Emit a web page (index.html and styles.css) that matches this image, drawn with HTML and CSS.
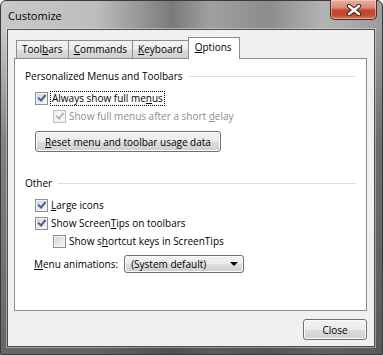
FILE: index.html
```html
<!DOCTYPE html>
<html lang="en">

<head>
    <meta charset="UTF-8">
    <link rel="stylesheet" href="styles.css">
    <title>Customize</title>
</head>

<body>
    <div class="window">
        <div class="titlebar">
            <span class="title">Customize</span>
            <div class="close-x">
                <svg width="20" height="12" viewBox="0 0 20 12">
                    <path d="M5 2 L15 10 M15 2 L5 10" stroke="#3a2420" stroke-width="4.4" stroke-linecap="round" fill="none"/>
                    <path d="M5 2 L15 10 M15 2 L5 10" stroke="#ffffff" stroke-width="2.4" stroke-linecap="round" fill="none"/>
                </svg>
            </div>
        </div>
        <div class="frame">
            <div class="client">
                <div class="tabs">
                    <div class="tab">Tool<u>b</u>ars</div>
                    <div class="tab"><u>C</u>ommands</div>
                    <div class="tab"><u>K</u>eyboard</div>
                    <div class="tab active"><u>O</u>ptions</div>
                </div>
                <div class="panel">
                    <!-- personalized menus -->
                    <div class="group-title"><span>Personalized Menus and Toolbars</span></div>
                    <div class="row">
                        <span class="box checked"></span>
                        <span class="focus">Always show full me<u>n</u>us</span>
                    </div>
                    <div class="row sub disabled">
                        <span class="box checked"></span>
                        <span>Show full menus after a short <u>d</u>elay</span>
                    </div>
                    <div class="btn reset"><u>R</u>eset menu and toolbar usage data</div>

                    <!-- other -->
                    <div class="group-title other"><span>Other</span></div>
                    <div class="row">
                        <span class="box checked"></span>
                        <span><u>L</u>arge icons</span>
                    </div>
                    <div class="row">
                        <span class="box checked"></span>
                        <span>Show Screen<u>T</u>ips on toolbars</span>
                    </div>
                    <div class="row sub">
                        <span class="box"></span>
                        <span>Show s<u>h</u>ortcut keys in ScreenTips</span>
                    </div>
                    <div class="anim-row">
                        <span><u>M</u>enu animations:</span>
                        <div class="select">
                            <span>(System default)</span>
                            <span class="arrow"></span>
                        </div>
                    </div>
                </div>
                <div class="footer">
                    <div class="btn close-btn">Close</div>
                </div>
            </div>
        </div>
    </div>
</body>

</html>
```
FILE: styles.css
```css
* {
    box-sizing: border-box;
}

body {
    margin: 0;
    background: #ffffff;
    font-family: 'Open Sans', sans-serif;
    font-size: 10px;
    color: #000;
}

.window {
    width: 383px;
    height: 355px;
    border: 1px solid #3a3a3a;
    border-radius: 6px 6px 0 0;
    display: flex;
    flex-direction: column;
    background:
        linear-gradient(to bottom, rgba(70, 70, 70, 0) 30px, rgba(70, 70, 70, 0.55) 140px, rgba(60, 60, 60, 0.7) 100%),
        linear-gradient(to right, #c9c9c9 0%, #bdbdbd 25%, #7a7a7a 45%, #a0a0a0 55%, #8c8c8c 70%, #b4b4b4 85%, #9c9c9c 100%);
}

.titlebar {
    height: 28px;
    display: flex;
    justify-content: space-between;
    align-items: flex-start;
    padding-left: 7px;
    padding-right: 5px;
}

.title {
    margin-top: 7px;
    font-size: 11px;
    color: #000;
}

.close-x {
    width: 47px;
    height: 20px;
    margin-top: -1px;
    border: 1px solid #4d2a24;
    border-top: none;
    border-radius: 0 0 5px 5px;
    background: linear-gradient(to bottom, #e8b0a0 0%, #d98a74 40%, #c7452c 55%, #c24a30 80%, #d8785c 100%);
    box-shadow: inset 0 0 0 1px rgba(255, 220, 210, 0.5);
    display: flex;
    justify-content: center;
    align-items: center;
}

.frame {
    flex: 1;
    padding: 0 7px 7px 6px;
    display: flex;
}

.client {
    flex: 1;
    background: #f0f0f0;
    border: 1px solid #4f4f4f;
    box-shadow: 0 0 0 1px rgba(230, 230, 230, 0.45);
    padding: 7px 7px 0 6px;
    display: flex;
    flex-direction: column;
}

.tabs {
    display: flex;
    align-items: flex-end;
    padding-left: 2px;
    height: 21px;
}

.tab {
    height: 18px;
    padding: 0 5px 0 5px;
    border: 1px solid #898c95;
    border-bottom: none;
    border-right: none;
    background: linear-gradient(to bottom, #f3f3f3 0%, #ebebeb 50%, #dddddd 51%, #cfcfcf 100%);
    line-height: 17px;
}

.tab:nth-child(3) {
    border-right: 1px solid #898c95;
}

.tab.active {
    height: 22px;
    margin-bottom: -1px;
    margin-left: -1px;
    padding: 0 7px 0 6px;
    background: #ffffff;
    border-right: 1px solid #898c95;
    position: relative;
    line-height: 18px;
}

.panel {
    height: 253px;
    background: #ffffff;
    border: 1px solid #898c95;
    padding: 9px 10px 0 10px;
}

.group-title {
    display: flex;
    align-items: center;
    height: 16px;
    color: #000;
}

.group-title::after {
    content: "";
    flex: 1;
    height: 1px;
    background: #d5dfe5;
    margin-left: 6px;
}

.row {
    display: flex;
    align-items: center;
    height: 18px;
    margin-left: 10px;
}

.row.sub {
    margin-left: 28px;
}

.group-title + .row {
    margin-top: 5px;
}

.box {
    width: 13px;
    height: 13px;
    border: 1px solid #8e8f8f;
    background: linear-gradient(135deg, #cdd0d6 0%, #eeeeee 70%, #f8f8f8 100%);
    box-shadow: inset 0 0 0 1px #f4f4f4;
    margin-right: 3px;
    display: flex;
    justify-content: center;
    align-items: center;
}

.box.checked::after {
    content: "";
    width: 6px;
    height: 3px;
    border-left: 2px solid #4a5f9a;
    border-bottom: 2px solid #4a5f9a;
    transform: rotate(-50deg) translate(1px, -1px);
}

.disabled {
    color: #8d8d8d;
}

.disabled .box {
    border-color: #bcbcbc;
    background: #f4f4f4;
}

.disabled .box.checked::after {
    border-color: #b5b5b5;
}

.focus {
    outline: 1px dotted #000;
    padding: 0 1px;
    line-height: 13px;
}

.btn {
    border: 1px solid #707070;
    border-radius: 3px;
    background: linear-gradient(to bottom, #f2f2f2 0%, #ebebeb 50%, #dddddd 51%, #cfcfcf 100%);
    box-shadow: inset 0 0 0 1px #fcfcfc;
    display: flex;
    justify-content: center;
    align-items: center;
}

.reset {
    width: 186px;
    height: 21px;
    margin: 6px 0 0 10px;
}

.other {
    margin-top: 23px;
}

.anim-row {
    display: flex;
    align-items: center;
    margin: 5px 0 0 9px;
    height: 18px;
}

.select {
    width: 120px;
    height: 18px;
    margin-left: 6px;
    border: 1px solid #707070;
    border-radius: 3px;
    background: linear-gradient(to bottom, #f2f2f2 0%, #ebebeb 50%, #dddddd 51%, #cfcfcf 100%);
    box-shadow: inset 0 0 0 1px #fcfcfc;
    display: flex;
    justify-content: space-between;
    align-items: center;
    padding: 0 5px 0 6px;
}

.arrow {
    width: 0;
    height: 0;
    border-left: 4px solid transparent;
    border-right: 4px solid transparent;
    border-top: 4px solid #000;
}

.footer {
    flex: 1;
    display: flex;
    justify-content: flex-end;
    align-items: flex-start;
    padding-top: 8px;
}

.close-btn {
    width: 64px;
    height: 21px;
}
```
